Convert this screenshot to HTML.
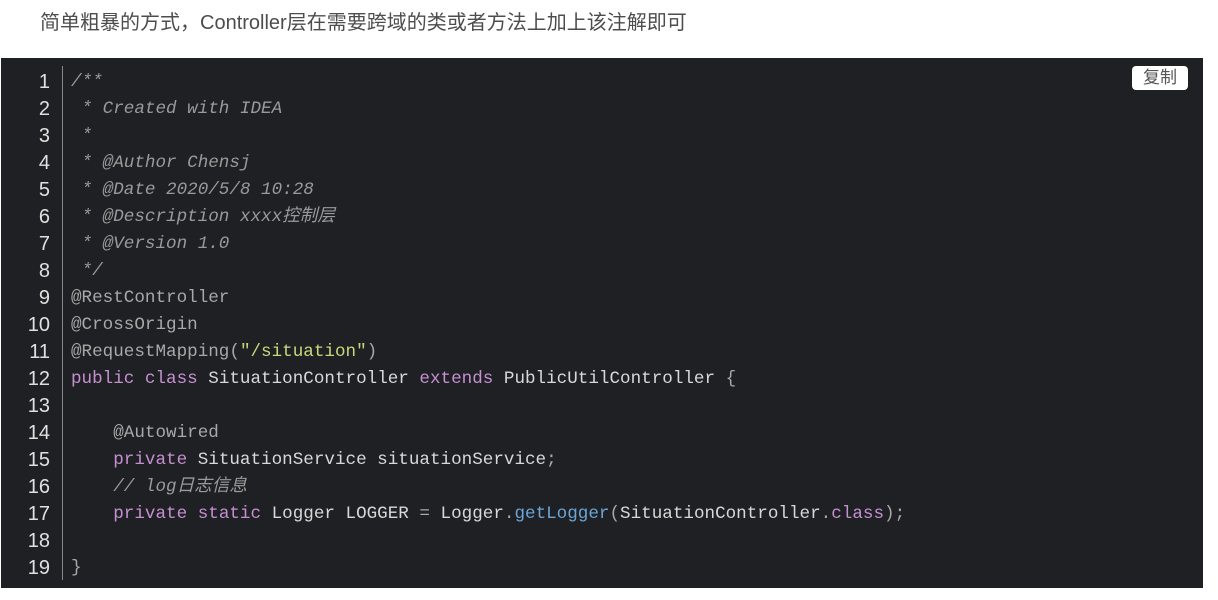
<!DOCTYPE html>
<html><head><meta charset="utf-8"><style>
body{margin:0;background:#fff;width:1218px;height:600px;overflow:hidden;font-family:"Liberation Sans","Noto Sans CJK SC",sans-serif}
.p{position:absolute;left:40px;top:9px;font-size:20px;color:#4d4d4d;line-height:28px}
.code{position:absolute;left:1px;top:58px;width:1202px;height:530px;background:#1f2023}
.ln{position:absolute;left:0;top:11px;width:49px;text-align:right;color:#e0e0e0;font-family:"Liberation Sans",sans-serif;font-size:20px;line-height:27px}
.sep{position:absolute;left:61px;top:8px;width:1px;height:514px;background:#888}
pre{position:absolute;left:70px;top:11px;margin:0;font-family:"Liberation Mono","Noto Sans CJK SC",monospace;font-size:17.6px;line-height:27px;color:#d8d8d8}
.c{color:#9a9a9a;font-style:italic}.k{color:#c58fd0}.s{color:#c9d67a}.f{color:#6aa6d8}.a{color:#a8a8a8}
.btn{position:absolute;left:1132px;top:66px;width:56px;height:24px;background:#fff;border-radius:4px;font-size:17px;color:#555;text-align:center;line-height:24px}
</style></head><body>
<div class="p">简单粗暴的方式，Controller层在需要跨域的类或者方法上加上该注解即可</div>
<div class="code">
<div class="ln">1<br>2<br>3<br>4<br>5<br>6<br>7<br>8<br>9<br>10<br>11<br>12<br>13<br>14<br>15<br>16<br>17<br>18<br>19</div>
<div class="sep"></div>
<pre><span class="c">/**
 * Created with IDEA
 *
 * @Author Chensj
 * @Date 2020/5/8 10:28
 * @Description xxxx控制层
 * @Version 1.0
 */</span>
<span class="a">@RestController</span>
<span class="a">@CrossOrigin</span>
<span class="a">@RequestMapping(</span><span class="s">"/situation"</span><span class="a">)</span>
<span class="k">public class</span> SituationController <span class="k">extends</span> PublicUtilController <span class="a">{</span>

    <span class="a">@Autowired</span>
    <span class="k">private</span> SituationService situationService<span class="a">;</span>
    <span class="c">// log日志信息</span>
    <span class="k">private static</span> Logger LOGGER <span class="a">=</span> Logger<span class="a">.</span><span class="f">getLogger</span><span class="a">(</span>SituationController<span class="a">.</span><span class="k">class</span><span class="a">);</span>

<span class="a">}</span></pre>
</div>
<div class="btn">复制</div>
</body></html>
